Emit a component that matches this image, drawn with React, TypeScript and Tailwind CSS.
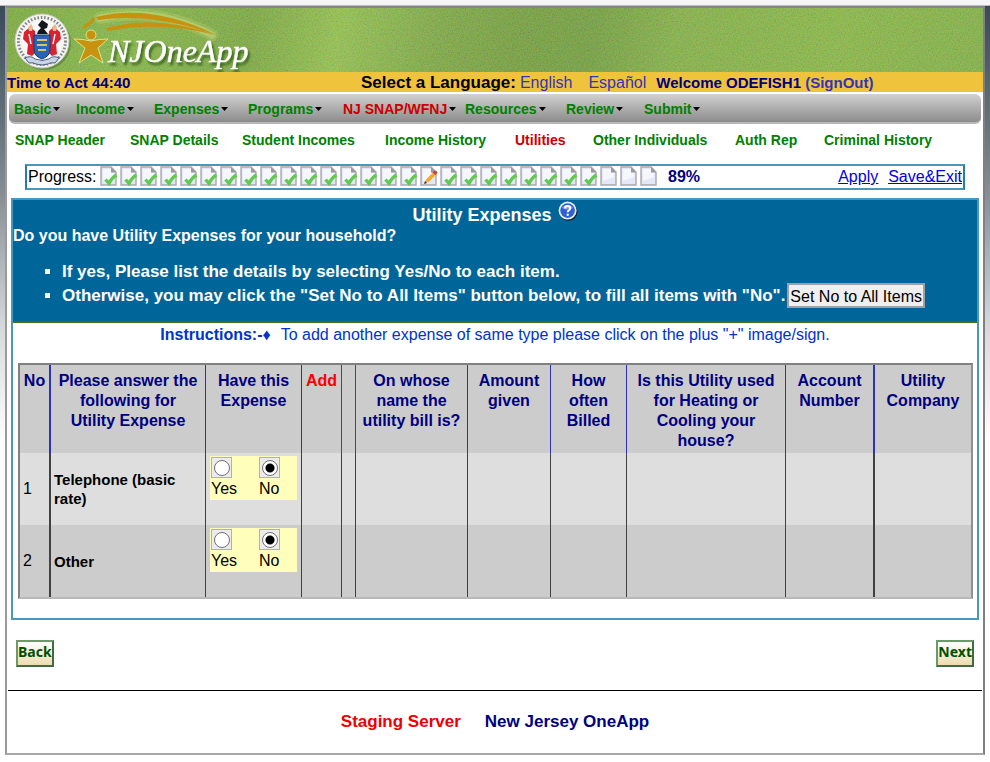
import React from "react";

const menu = ["Basic", "Income", "Expenses", "Programs", "NJ SNAP/WFNJ", "Resources", "Review", "Submit"];

const tabs = [
  "SNAP Header",
  "SNAP Details",
  "Student Incomes",
  "Income History",
  "Utilities",
  "Other Individuals",
  "Auth Rep",
  "Criminal History",
];

type Step = "done" | "current" | "todo";

const steps: Step[] = Array.from({ length: 28 }, (_, i) => (i === 16 ? "current" : i > 24 ? "todo" : "done"));

const rows = [
  { id: 1, name: "Telephone (basic rate)" },
  { id: 2, name: "Other" },
];

function StateSeal() {
  return (
    <svg width="58" height="60" viewBox="0 0 58 60" role="img" aria-label="State seal">
      <circle cx="30" cy="31" r="27" fill="#4d7a30" opacity="0.6" />
      <circle cx="28" cy="29" r="27" fill="#f4f4f2" stroke="#c8c8c0" />
      <circle cx="28" cy="29" r="23.500" fill="none" stroke="#55585a" strokeWidth="3" strokeDasharray="1.6 1.8" opacity="0.7" />
      <circle cx="28" cy="29" r="20" fill="#f8f8f8" />
      <path d="M10 20l6-5 5 4 1 21-4 4-5-2 1-10-5-5z" fill="#d8222f" />
      <path d="M46 20l-6-5-5 4-1 21 4 4 5-2-1-10 5-5z" fill="#d8222f" />
      <path d="M14 15l3-3 2 3-1 4h-3zM38 15l3-3 2 3-1 4h-3z" fill="#e7b994" />
      <path d="M15 22l2 10M41 22l-2 10" stroke="#fff" strokeWidth="1.4" />
      <path d="M20 23h16v15q0 6-8 9-8-3-8-9z" fill="#2b63b8" stroke="#173a78" />
      <path d="M23 28h10M23 33h10M24 38h8" stroke="#d9c36a" strokeWidth="1.8" />
      <path d="M23 22q1-4 4-6l-3-3 4-5 6 4-1 4-3 1 4 5z" fill="#15151d" />
      <path d="M11 46q6-3 10 1 7 3 14 0 4-4 10-1l-4 5q-5-1-7 1-6 2-12 0-3-2-7-1z" fill="#c9d4e6" stroke="#4a5f86" />
    </svg>
  );
}

function BrandMark() {
  return (
    <svg width="190" height="64" viewBox="0 0 190 64" role="img" aria-label="NJOneApp">
      <g fill="none" stroke="#d9e58a" strokeLinecap="round">
        <path d="M28 10Q85-2 140 27" strokeWidth="12" opacity="0.2" />
        <path d="M28 10Q85-2 140 27" strokeWidth="7" opacity="0.35" />
      </g>
      <path d="M24 9Q80-5 144 27Q80 4 26 12Z" fill="#c8920f" />
      <path d="M34 20Q84 6 144 27Q88 13 36 23Z" fill="#c8920f" />
      <path d="M11 20l8-6M18 16l4-6" stroke="#c8920f" strokeWidth="3" />
      <g fill="#c8920f" stroke="#d9e58a" strokeWidth="1">
        <path d="M19 33q-8-2-17-2l11 9-6 15 12-8 12 8-5-15 10-9q-9 0-17 2z" />
        <circle cx="19" cy="27" r="5" />
      </g>
      <text
        x="36"
        y="54"
        fontFamily="'Liberation Serif', serif"
        fontStyle="italic"
        fontSize="32"
        fill="#fff"
        stroke="#fff"
        strokeWidth="0.5"
        className="drop-shadow-[2px_3px_1px_#3f6b22]"
      >
        NJOneApp
      </text>
    </svg>
  );
}

function HeaderTexture() {
  return (
    <svg className="absolute inset-0 h-full w-full opacity-25" aria-hidden="true">
      <filter id="grain">
        <feTurbulence type="fractalNoise" baseFrequency="0.75" numOctaves="2" seed="4" />
        <feColorMatrix values="1 0 0 0 -0.1  0 1.2 0 0 -0.05  0 0 0.6 0 -0.1  0 0 0 0 1" />
      </filter>
      <rect width="100%" height="100%" filter="url(#grain)" />
    </svg>
  );
}

function StepIcon({ step, n }: { step: Step; n: number }) {
  return (
    <svg width="20" height="20" viewBox="0 0 20 20" role="img" aria-label={`Step ${n}: ${step}`}>
      <path d="M1 1h10l5 5v13H1z" fill="#e4e8f6" stroke="#a9a9ad" strokeWidth="1.4" />
      <path d="M3 3h8v4h3v4L3 15z" fill="#f6f7fc" />
      <path d="M11 1v5.500H16z" fill="#9a9a9e" />
      {step === "done" && <path d="M5.500 13.500l3.500 4q3-6 7.500-8.500" fill="none" stroke="#5fcb4c" strokeWidth="3.2" />}
      {step === "current" && (
        <>
          <path d="M5 17l1.500-4 7-7 3 2.500-7.500 7z" fill="#f2a92c" />
          <path d="M12.500 6.500l2-2q2 0 3 2L15.500 9z" fill="#c8403a" />
          <path d="M4 18l1-3 2 2z" fill="#333" />
        </>
      )}
    </svg>
  );
}

function HelpIcon() {
  return (
    <svg width="20" height="20" viewBox="0 0 20 20" aria-hidden="true">
      <circle cx="10.500" cy="10.800" r="9" fill="#10243c" />
      <circle cx="9.600" cy="9.600" r="9" fill="#e8ecf4" />
      <circle cx="9.600" cy="9.600" r="7.300" fill="#2f5fd0" />
      <path d="M4 7a6 5 0 0 1 11 0q-5 3-11 0z" fill="#7c9ff0" />
      <path d="M7 7.500Q7 5 9.600 5t2.600 2.300q0 1.400-1.400 2.100-1.100.6-1.100 1.800" fill="none" stroke="#fff" strokeWidth="1.900" />
      <circle cx="9.700" cy="13.700" r="1.200" fill="#fff" />
    </svg>
  );
}

function Choice({ row, label, checked }: { row: number; label: string; checked?: boolean }) {
  return (
    <label className="flex w-12 shrink-0 flex-col items-start">
      <span className="flex size-[21px] items-center justify-center border border-[#b0b0b0] bg-[#ececec]">
        <input
          type="radio"
          name={`expense-${row}`}
          defaultChecked={checked}
          className="size-4 appearance-none rounded-full border border-[#707070] bg-white checked:bg-[radial-gradient(circle,#000_0_4px,#fff_5px)]"
        />
      </span>
      <span className="text-[16px] leading-[22px]">{label}</span>
    </label>
  );
}

const headText = "px-1 pt-1.5 align-top leading-5 font-bold";
const blueRule = "border-r border-r-[#3030b0]";
const redRule = "border-r border-r-[#ff0000]";
const darkRule = "border-r border-r-[#404040]";

export default function App() {
  return (
    <div className="min-h-screen bg-white font-['Liberation_Sans',Arial,sans-serif] text-[16px] text-black">
      <div className="h-[5px] bg-[#f6f6f6]" />
      <div className="h-px bg-[#bcbcbc]" />
      <div className="bg-[linear-gradient(#3a4a58_0px,#65747c_120px,#858d93_185px,#d8dbde_325px,#fff_440px)] pb-2">
        <div className="mx-[5px] border-2 border-t-[#85858c] border-r-[#808080] border-b-[#a8a8a8] border-l-[#9a9a9a] bg-white">
          <header className="relative h-16 bg-[linear-gradient(100deg,#78a83e_0%,#84b44a_12%,#78a442_25%,#93bf52_34%,#7ba447_44%,#719a40_52%,#6f9a42_60%,#82ad4a_68%,#88b549_85%,#80ad48_100%)]">
            <HeaderTexture />
            <div className="relative flex items-start pl-[7px]">
              <div className="pt-1">
                <StateSeal />
              </div>
              <BrandMark />
            </div>
          </header>

          <div className="flex h-5 items-center bg-[#f0c33c] whitespace-nowrap">
            <span className="w-[354px] shrink-0 pt-0.5 text-[15px] font-bold text-[#000080]">Time to Act 44:40</span>
            <div className="flex items-baseline pt-px">
              <b className="text-[17px]">Select a Language:</b>
              <a href="#en" className="ml-1 text-[#3333bb]">English</a>
              <a href="#es" className="ml-4 text-[#3333bb]">Español</a>
              <b className="ml-2.5 text-[15px] text-[#000080]">
                Welcome ODEFISH1{" "}
                <a href="#signout" className="text-[#3333bb]">(SignOut)</a>
              </b>
            </div>
          </div>

          <nav
            aria-label="Main"
            className="mx-0.5 mt-0.5 grid h-[30px] grid-cols-[62px_78px_94px_95px_122px_101px_78px_auto] items-center rounded-md border-b-2 border-[#b8b8b8] bg-linear-to-b from-[#d2d2d2] to-[#8c8c8c] pt-0.5 pl-[5px] text-[14px] font-bold whitespace-nowrap text-[#008000]"
          >
            {menu.map((m) => (
              <button key={m} className={m.startsWith("NJ") ? "flex items-center gap-0.5 text-[#cc0000]" : "flex items-center gap-0.5"}>
                {m}
                <svg width="7" height="4" viewBox="0 0 7 4" aria-hidden="true" className="shrink-0">
                  <path d="M0 0h7L3.500 4z" fill="#000" />
                </svg>
              </button>
            ))}
          </nav>

          <nav
            aria-label="NJ SNAP/WFNJ"
            className="grid h-8 grid-cols-[115px_112px_143px_130px_78px_142px_89px_auto] items-center pl-2 text-[14px] font-bold whitespace-nowrap text-[#008000]"
          >
            {tabs.map((t) => (
              <a key={t} href="#tab" className={t === "Utilities" ? "text-[#cc0000]" : ""}>
                {t}
              </a>
            ))}
          </nav>

          <div className="mx-[18px] mt-2 flex h-[26px] items-center border-2 border-t-[#4a96bc] border-r-[#2a7ba8] border-b-[#4a96bc] border-l-[#2a7ba8] pr-px pl-px whitespace-nowrap">
            <span className="w-[72px] shrink-0">Progress:</span>
            <div className="flex shrink-0 self-start">
              {steps.map((s, i) => (
                <StepIcon key={i} step={s} n={i + 1} />
              ))}
            </div>
            <b className="ml-2 text-[#000080]">89%</b>
            <div className="ml-auto flex gap-2.5 text-[#0000e0] underline">
              <a href="#apply">Apply</a>
              <a href="#save">Save&amp;Exit</a>
            </div>
          </div>

          <main className="mx-1 mt-2 border-2 border-[#4a96bc] pb-[19px]">
            <section className="h-[123px] border-b-2 border-[#4a6b10] bg-[#006699] font-bold text-white">
              <h1 className="flex h-[26px] items-center justify-center gap-1.5 pt-1 text-[18px]">
                Utility Expenses
                <button aria-label="Help" className="pb-2">
                  <HelpIcon />
                </button>
              </h1>
              <p className="leading-5">Do you have Utility Expenses for your household?</p>
              <ul className="mt-3.5 list-[square] pl-[49px] text-[17px] leading-[23px]">
                <li>If yes, Please list the details by selecting Yes/No to each item.</li>
                <li>
                  <div className="flex items-center gap-0.5 whitespace-nowrap">
                    Otherwise, you may click the "Set No to All Items" button below, to fill all items with "No".
                    <button className="h-[25px] border-2 border-[#a0a0a0] bg-[#efefef] px-px text-[16px] font-normal text-black">
                      Set No to All Items
                    </button>
                  </div>
                </li>
              </ul>
            </section>

            <p className="text-center leading-6 text-[#0033cc]">
              <b>Instructions:-♦</b>
              <span className="ml-2.5">To add another expense of same type please click on the plus "+" image/sign.</span>
            </p>

            <div className="mr-1 ml-[5px] pt-4">
              <table className="w-full table-fixed border-separate border-spacing-0 border-2 border-t-[#808080] border-r-[#909090] border-b-[#b8b8b8] border-l-[#808080]">
                <colgroup>
                  <col className="w-[31px]" />
                  <col />
                  <col className="w-24" />
                  <col className="w-10" />
                  <col className="w-3.5" />
                  <col className="w-28" />
                  <col className="w-[83px]" />
                  <col className="w-[76px]" />
                  <col className="w-[159px]" />
                  <col className="w-[89px]" />
                  <col className="w-[96px]" />
                </colgroup>
                <thead>
                  <tr className="h-[88px] bg-[#cccccc] text-[#000080]">
                    <th className="border-r-2 border-r-[#3030b0] pt-1.5 align-top leading-5">No</th>
                    <th className={`${headText} ${blueRule} whitespace-nowrap`}>Please answer the<br />following for<br />Utility Expense</th>
                    <th className={`${headText} ${blueRule}`}>Have this Expense</th>
                    <th className={`${redRule} pt-1.5 align-top leading-5 text-[#ff0000]`}>Add</th>
                    <th className={redRule} />
                    <th className={`${headText} ${blueRule} whitespace-nowrap`}>On whose<br />name the<br />utility bill is?</th>
                    <th className={`${headText} ${blueRule}`}>Amount given</th>
                    <th className={`${headText} ${blueRule}`}>How often Billed</th>
                    <th className={`${headText} ${blueRule}`}>Is this Utility used for Heating or Cooling your house?</th>
                    <th className={`${headText} border-r-2 border-r-[#3030b0]`}>Account Number</th>
                    <th className={headText}>Utility Company</th>
                  </tr>
                </thead>
                <tbody>
                  {rows.map((r) => (
                    <tr key={r.id} className="h-18 odd:bg-[#dedede] even:bg-[#cccccc]">
                      <td className="border-r-2 border-r-[#404040] pl-[3px]">{r.id}</td>
                      <th scope="row" className={`${darkRule} pr-6 pl-[3px] text-left text-[15px] leading-[19px]`}>
                        {r.name}
                      </th>
                      <td className={`${darkRule} px-1 pt-[3px] align-top`}>
                        <div className="flex h-11 bg-[#ffffbb] pt-px pl-px">
                          <Choice row={r.id} label="Yes" />
                          <Choice row={r.id} label="No" checked />
                        </div>
                      </td>
                      <td className={darkRule} />
                      <td className={darkRule} />
                      <td className={darkRule} />
                      <td className={darkRule} />
                      <td className={darkRule} />
                      <td className={darkRule} />
                      <td className="border-r-2 border-r-[#404040]" />
                      <td />
                    </tr>
                  ))}
                </tbody>
              </table>
            </div>
          </main>

          <div className="mx-[9px] mt-5 flex justify-between">
            {["Back", "Next"].map((b) => (
              <button
                key={b}
                className="h-[27px] border-2 border-t-[#6a9a6a] border-r-[#3f6b3f] border-b-[#3f6b3f] border-l-[#6a9a6a] bg-linear-to-b from-white to-[#ecdcae] pb-1 font-['Noto_Sans',sans-serif] text-[14px] leading-4 font-bold text-[#005000]"
              >
                {b}
              </button>
            ))}
          </div>

          <footer className="mx-px mt-[23px] flex h-[63px] items-center justify-center gap-6 border-t border-black text-[17px] font-bold">
            <span className="text-[#ee0000]">Staging Server</span>
            <span className="text-[#000080]">New Jersey OneApp</span>
          </footer>
        </div>
      </div>
    </div>
  );
}
